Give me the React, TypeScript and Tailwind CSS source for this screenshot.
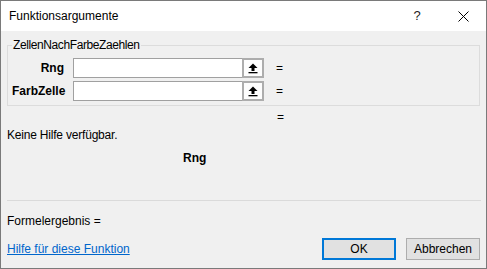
import React from "react";

function PickIcon() {
  return (
    <svg width="10" height="11" viewBox="0 0 10 11" fill="#000">
      <polygon points="0.5,5 5,0.5 9.5,5" />
      <rect x="3.5" y="4.5" width="3" height="3.5" />
      <rect x="0.5" y="9" width="9" height="1.3" />
    </svg>
  );
}

function ArgRow({ label }: { label: string }) {
  return (
    <div className="flex items-center h-[20px]">
      <span className="w-[52px] text-right font-bold">{label}</span>
      <div className="ml-[9px] w-[170px] h-[20px] bg-white border border-[#a0a0a0]" />
      <button className="w-[22px] h-[20px] -ml-px flex items-center justify-center border-2 border-[#adadad] bg-[#fdfdfd]">
        <PickIcon />
      </button>
      <span className="ml-[12px]">=</span>
    </div>
  );
}

export default function App() {
  return (
    <div
      className="w-[487px] h-[269px] border border-[#7a7a7a] bg-[#f0f0f0] flex flex-col text-[12px] leading-[14px] text-black"
      style={{ fontFamily: '"Liberation Sans", Arial, sans-serif' }}
    >
      {/* Title bar */}
      <div className="h-[30px] bg-white flex items-center shrink-0">
        <span className="pl-[8px] flex-1">Funktionsargumente</span>
        <div className="w-[46px] h-full flex items-center justify-center text-[13px] text-[#222]">?</div>
        <div className="w-[46px] h-full flex items-center justify-center">
          <svg width="11" height="11" viewBox="0 0 11 11" stroke="#000" strokeWidth="1">
            <line x1="0.5" y1="0.5" x2="10.5" y2="10.5" />
            <line x1="10.5" y1="0.5" x2="0.5" y2="10.5" />
          </svg>
        </div>
      </div>

      <div className="flex-1 flex flex-col px-[6px]">
        {/* Argument group */}
        <fieldset className="mt-[7px] border border-[#dcdcdc] pl-[4px] pt-[6px] pb-[4px]">
          <legend className="px-[1px] leading-[14px] tracking-[-0.4px]">ZellenNachFarbeZaehlen</legend>
          <div className="flex flex-col gap-[3px]">
            <ArgRow label="Rng" />
            <ArgRow label="FarbZelle" />
          </div>
        </fieldset>

        <div className="mt-[4px] pl-[270px]">=</div>
        <div className="mt-[4px] tracking-[-0.2px]">Keine Hilfe verfügbar.</div>
        <div className="mt-[9px] pl-[176px] font-bold">Rng</div>

        <div className="mt-[35px] h-px bg-[#dadada] mr-[-1px]" />

        <div className="mt-[13px]">Formelergebnis =</div>

        <div className="mt-[10px] flex items-center">
          <a href="#" className="text-[#0066cc] underline flex-1">
            Hilfe für diese Funktion
          </a>
          <button className="w-[74px] h-[22px] border-2 border-[#0078d7] bg-[#e1e1e1]">OK</button>
          <button className="ml-[10px] w-[74px] h-[22px] border border-[#adadad] bg-[#e1e1e1]">
            Abbrechen
          </button>
        </div>
      </div>
    </div>
  );
}
